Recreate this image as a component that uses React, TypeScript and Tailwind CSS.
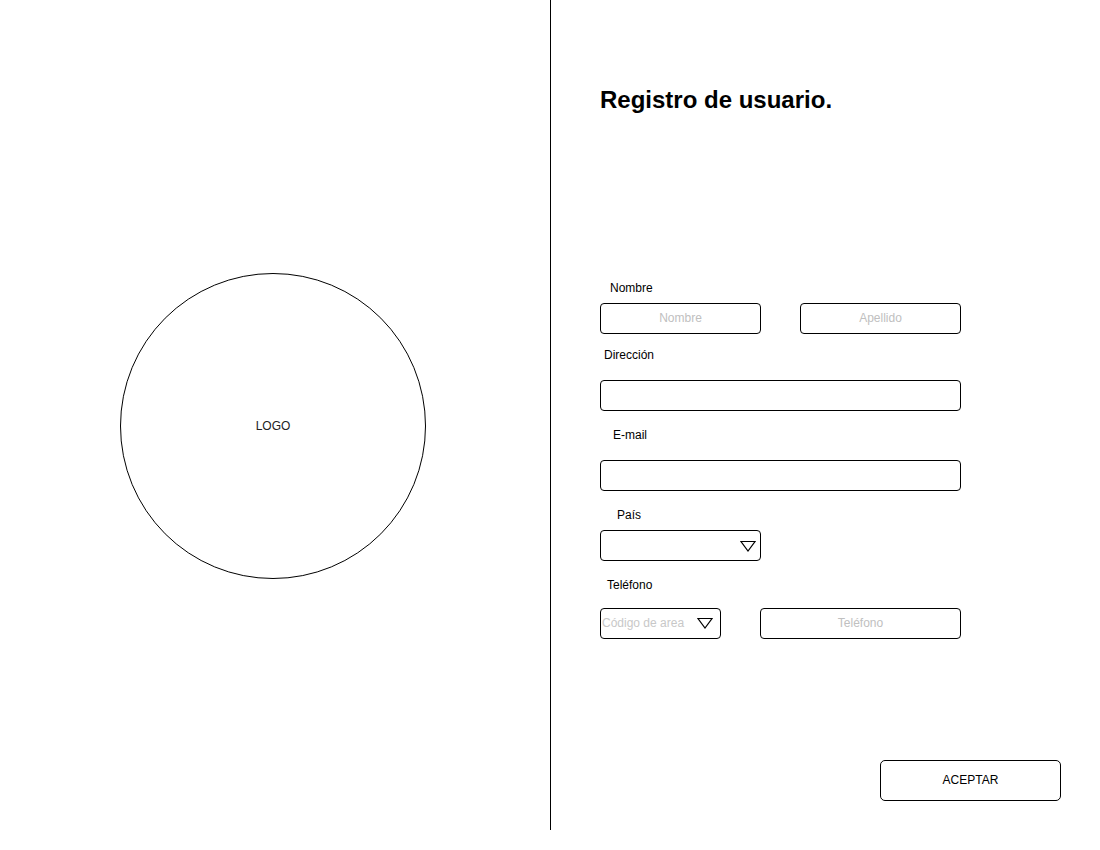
import React from "react"

function Caret() {
  return (
    <svg width="16" height="12" viewBox="0 0 16 12" className="shrink-0">
      <path d="M1 1.5 H15 L8 11 Z" fill="none" stroke="#000" strokeWidth="1.2" strokeLinejoin="miter" />
    </svg>
  )
}

function Label({ text, pad }: { text: string; pad: string }) {
  return <div className={`text-[12px] leading-[16px] text-black ${pad}`}>{text}</div>
}

export default function App() {
  return (
    <div
      className="flex w-[1100px] h-[850px] bg-white"
      style={{ fontFamily: '"Liberation Sans", Arial, sans-serif' }}
    >
      {/* logo side */}
      <div className="w-[551px] h-[830px] border-r border-black shrink-0 pl-[120px] pt-[273px]">
        <div className="w-[306px] h-[306px] rounded-full border border-black flex items-center justify-center">
          <span className="text-[12px] text-[#222]">LOGO</span>
        </div>
      </div>

      {/* form side */}
      <div className="flex-1 pl-[49px] pt-[86px] flex flex-col">
        <h1 className="text-[24px] leading-[28px] font-bold text-black">Registro de usuario.</h1>

        <div className="mt-[166px]">
          <Label text="Nombre" pad="pl-[10px]" />
        </div>
        <div className="mt-[7px] flex gap-[39px]">
          <input
            placeholder="Nombre"
            className="w-[161px] h-[31px] border border-black rounded-[4px] text-center text-[12px] pb-[1px] outline-none placeholder:text-[#c0c0c0]"
          />
          <input
            placeholder="Apellido"
            className="w-[161px] h-[31px] border border-black rounded-[4px] text-center text-[12px] pb-[1px] outline-none placeholder:text-[#c0c0c0]"
          />
        </div>

        <div className="mt-[13px]">
          <Label text="Dirección" pad="pl-[4px]" />
        </div>
        <input className="mt-[17px] w-[361px] h-[31px] border border-black rounded-[4px] text-[12px] outline-none" />

        <div className="mt-[16px]">
          <Label text="E-mail" pad="pl-[13px]" />
        </div>
        <input className="mt-[17px] w-[361px] h-[31px] border border-black rounded-[4px] text-[12px] outline-none" />

        <div className="mt-[16px]">
          <Label text="País" pad="pl-[17px]" />
        </div>
        <div className="mt-[7px] w-[161px] h-[31px] border border-black rounded-[4px] flex items-center justify-end pr-[4px] pt-[1px]">
          <Caret />
        </div>

        <div className="mt-[16px]">
          <Label text="Teléfono" pad="pl-[7px]" />
        </div>
        <div className="mt-[15px] flex gap-[39px]">
          <div className="w-[121px] h-[31px] border border-black rounded-[4px] flex items-center justify-between pl-[1px] pr-[7px] pb-[1px]">
            <span className="text-[12px] text-[#c8c8c8] whitespace-nowrap">Código de area</span>
            <Caret />
          </div>
          <input
            placeholder="Teléfono"
            className="w-[201px] h-[31px] border border-black rounded-[4px] text-center text-[12px] pb-[1px] outline-none placeholder:text-[#c0c0c0]"
          />
        </div>

        <button className="mt-[121px] ml-[280px] self-start w-[181px] h-[41px] border border-black rounded-[5px] text-[12px] text-black bg-white pb-[1px]">
          ACEPTAR
        </button>
      </div>
    </div>
  )
}
